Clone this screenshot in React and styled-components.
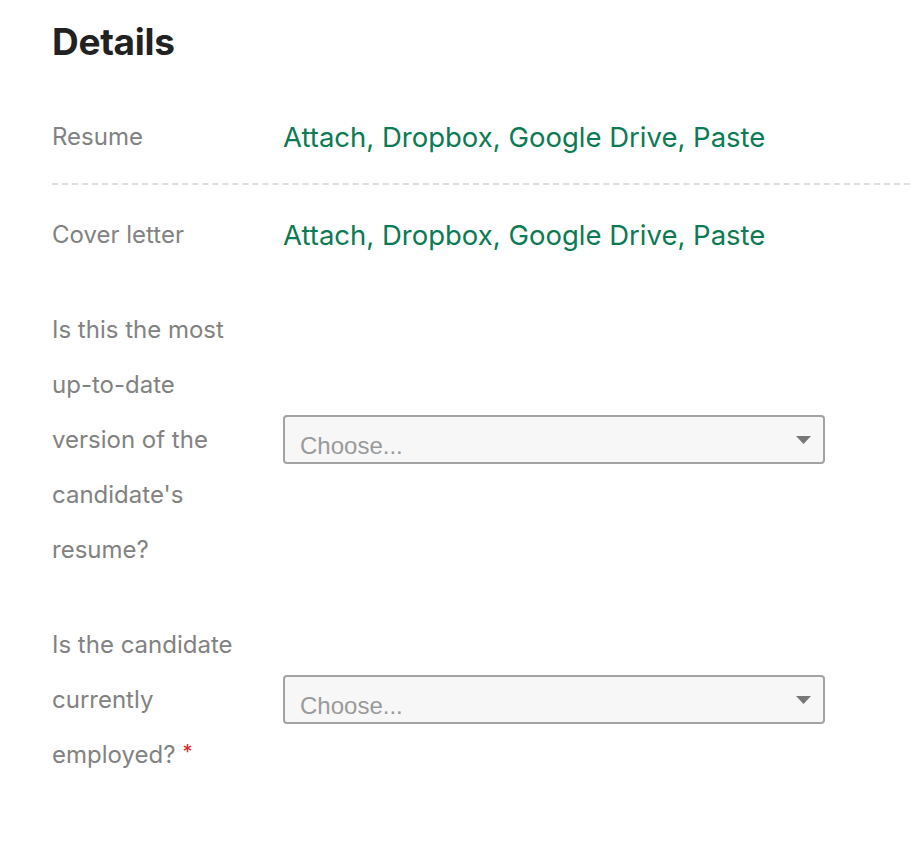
import React from "react";
import styled, { createGlobalStyle } from "styled-components";

const Global = createGlobalStyle`
  html, body { margin: 0; padding: 0; background: #fff; }
  body { font-family: "Inter", "Liberation Sans", sans-serif; }
`;

const Page = styled.div`
  padding: 22px 0 0 52px;
  width: 910px;
  box-sizing: border-box;
  overflow: hidden;
`;

const Heading = styled.h2`
  margin: 0 0 47px;
  font-size: 37px;
  line-height: 40px;
  font-weight: 700;
  color: #222;
  letter-spacing: -0.3px;
`;

const Row = styled.div`
  display: grid;
  grid-template-columns: 231px 542px;
  align-items: center;
  padding: ${(p) => p.$pad || "0"};
  border-bottom: ${(p) => (p.$divider ? "2px dashed #dedede" : "none")};
`;

const Label = styled.div`
  font-size: 24px;
  line-height: 55px;
  color: #828282;
  padding-right: 36px;
`;

const NoWrap = styled.span`
  white-space: nowrap;
`;

const Links = styled.div`
  font-size: 27.5px;
  color: #0b7a55;
  line-height: 40px;
  white-space: nowrap;
`;

const Req = styled.span`
  display: inline-block;
  color: #d8262b;
  font-size: 20px;
  line-height: 20px;
  margin-left: 7px;
  vertical-align: 4px;
`;

const SelectBox = styled.div`
  position: relative;
  height: 49px;
  box-sizing: border-box;
  border: 2px solid #a3a3a3;
  border-radius: 4px;
  background: #f7f7f7;
  display: flex;
  align-items: flex-end;
  padding: 0 0 2px 15px;
  font-family: "Liberation Sans", Arial, sans-serif;
  font-size: 24px;
  color: #9a9a9a;
`;

const Arrow = styled.svg`
  position: absolute;
  right: 12px;
  top: 19px;
`;

function Select() {
  return (
    <SelectBox>
      Choose...
      <Arrow width="15" height="8" viewBox="0 0 15 8">
        <path d="M0 0 H15 L7.5 8 Z" fill="#777" />
      </Arrow>
    </SelectBox>
  );
}

export default function App() {
  return (
    <>
      <Global />
      <Page>
        <Heading>Details</Heading>
        <Row $divider $pad="0 0 19px">
          <Label>Resume</Label>
          <Links>Attach, Dropbox, Google Drive, Paste</Links>
        </Row>
        <Row $pad="22px 0 0">
          <Label>Cover letter</Label>
          <Links>Attach, Dropbox, Google Drive, Paste</Links>
        </Row>
        <Row $pad="40px 0 0">
          <Label>
            Is this the most <NoWrap>up-to-date</NoWrap> version of the
            candidate's resume?
          </Label>
          <Select />
        </Row>
        <Row $pad="40px 0 0">
          <Label>
            Is the candidate currently{" "}
            <NoWrap>
              employed?<Req>*</Req>
            </NoWrap>
          </Label>
          <Select />
        </Row>
      </Page>
    </>
  );
}
